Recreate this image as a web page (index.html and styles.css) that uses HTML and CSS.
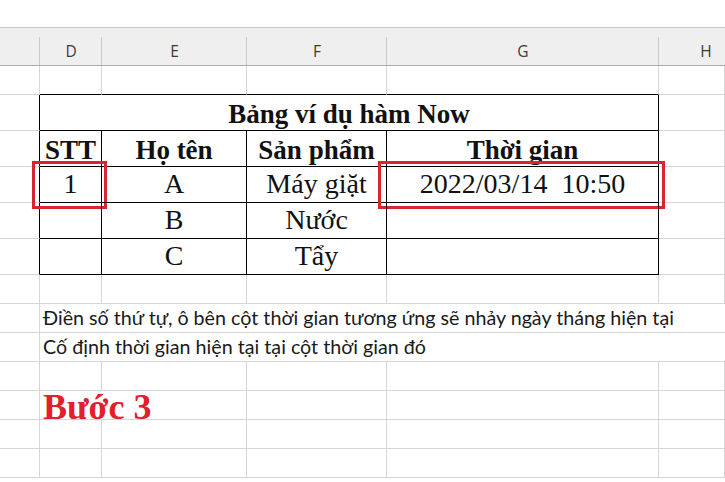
FILE: index.html
```html
<!DOCTYPE html>
<html lang="vi">
<head>
<meta charset="utf-8">
<title>Bảng ví dụ hàm Now</title>
<link rel="stylesheet" href="styles.css">
</head>
<body>
<div class="top"></div>
<div class="sheet">
  <!-- column headers -->
  <div class="h"></div>
  <div class="h">D</div>
  <div class="h">E</div>
  <div class="h">F</div>
  <div class="h">G</div>
  <div class="h">H</div>

  <!-- row 1 (empty, above table) -->
  <div class="c"></div>
  <div class="c tt"></div>
  <div class="c tt"></div>
  <div class="c tt"></div>
  <div class="c tt"></div>
  <div class="c"></div>

  <!-- table title -->
  <div class="c tl"></div>
  <div class="t title span4">Bảng ví dụ hàm Now</div>
  <div class="c"></div>

  <!-- table header -->
  <div class="c tl"></div>
  <div class="t b">STT</div>
  <div class="t b">Họ tên</div>
  <div class="t b">Sản phẩm</div>
  <div class="t b">Thời gian</div>
  <div class="c"></div>

  <!-- data row 1 -->
  <div class="c tl"></div>
  <div class="t mark-cell">1<span class="mark mark-stt"></span></div>
  <div class="t">A</div>
  <div class="t">Máy giặt</div>
  <div class="t mark-cell pre">2022/03/14  10:50<span class="mark mark-time"></span></div>
  <div class="c"></div>

  <!-- data row 2 -->
  <div class="c tl"></div>
  <div class="t"></div>
  <div class="t">B</div>
  <div class="t">Nước</div>
  <div class="t"></div>
  <div class="c"></div>

  <!-- data row 3 -->
  <div class="c tl"></div>
  <div class="t"></div>
  <div class="t">C</div>
  <div class="t">Tẩy</div>
  <div class="t"></div>
  <div class="c"></div>

  <!-- empty row -->
  <div class="c"></div>
  <div class="c"></div>
  <div class="c"></div>
  <div class="c"></div>
  <div class="c"></div>
  <div class="c"></div>

  <!-- note rows -->
  <div class="c"></div>
  <div class="note span-rest">Điền số thứ tự, ô bên cột thời gian tương ứng sẽ nhảy ngày tháng hiện tại</div>

  <div class="c"></div>
  <div class="note span-rest">Cố định thời gian hiện tại tại cột thời gian đó</div>

  <div class="c"></div>
  <div class="c"></div>
  <div class="c"></div>
  <div class="c"></div>
  <div class="c"></div>
  <div class="c"></div>

  <!-- step label -->
  <div class="c"></div>
  <div class="step span2">Bước 3</div>
  <div class="c"></div>
  <div class="c"></div>
  <div class="c"></div>

  <div class="c"></div><div class="c"></div><div class="c"></div><div class="c"></div><div class="c"></div><div class="c"></div>
  <div class="c"></div><div class="c"></div><div class="c"></div><div class="c"></div><div class="c"></div><div class="c"></div>
</div>
</body>
</html>
```
FILE: styles.css
```css
* { box-sizing: border-box; }

html, body {
  margin: 0;
  padding: 0;
  background: #ffffff;
  overflow: hidden;
}

body {
  width: 725px;
  height: 482px;
}

.top {
  height: 27px;
  background: #ffffff;
}

.sheet {
  display: grid;
  grid-template-columns: 40px 62px 145px 140px 272px 66px;
  grid-template-rows: 39px 29px 36px 36px 36px 36px 36px repeat(7, 29px);
  width: 725px;
  height: 455px;
  overflow: hidden;
}

/* column header */
.h {
  background:
    linear-gradient(#c9c9c9, #c9c9c9) right bottom / 1px 28px no-repeat,
    #efefef;
  border-top: 1px solid #c6c6c6;
  border-bottom: 1px solid #ababab;
  font-family: "Open Sans", "Noto Sans", sans-serif;
  font-size: 15.5px;
  color: #3a3a3a;
  display: flex;
  align-items: center;
  justify-content: center;
  padding-top: 8px;
}

.h:last-child,
.sheet > .h:nth-child(6) {
  background: #efefef;
  padding-left: 28px;
}

/* ordinary grid cell */
.c {
  border-right: 1px solid #d6d6d6;
  border-bottom: 1px solid #d6d6d6;
}

.c.tl { border-right-color: #000000; }
.c.tt { border-bottom-color: #000000; }

/* table cell */
.t {
  border-right: 1px solid #000000;
  border-bottom: 1px solid #000000;
  font-family: "Liberation Serif", "Times New Roman", serif;
  font-size: 28px;
  color: #111111;
  line-height: 34px;
  padding-top: 0;
  text-align: center;
  position: relative;
  white-space: nowrap;
}

.t.b,
.t.title {
  font-weight: bold;
  font-size: 27px;
  padding-top: 2px;
}

.pre { white-space: pre; }

.span4 { grid-column: span 4; }
.span2 { grid-column: span 2; }
.span-rest { grid-column: 2 / -1; }

/* notes under the table */
.note {
  border-bottom: 1px solid #d6d6d6;
  font-family: "Lato", "Open Sans", sans-serif;
  font-size: 19.7px;
  color: #1a1a1a;
  line-height: 28px;
  padding-left: 3px;
  white-space: nowrap;
}

.step {
  border-right: 1px solid #d6d6d6;
  border-bottom: 1px solid #d6d6d6;
  font-family: "Liberation Serif", "Times New Roman", serif;
  font-weight: bold;
  font-size: 36px;
  color: #e3202a;
  line-height: 28px;
  padding-left: 3px;
  padding-top: 2px;
  white-space: nowrap;
}

/* red highlight frames drawn over the table */
.mark {
  position: absolute;
  border: 3.5px solid #d8262f;
  pointer-events: none;
}

.mark-stt {
  left: -8px;
  top: -6px;
  width: 75px;
  height: 48px;
}

.mark-time {
  left: -9px;
  top: -6px;
  width: 287px;
  height: 48px;
}
```
